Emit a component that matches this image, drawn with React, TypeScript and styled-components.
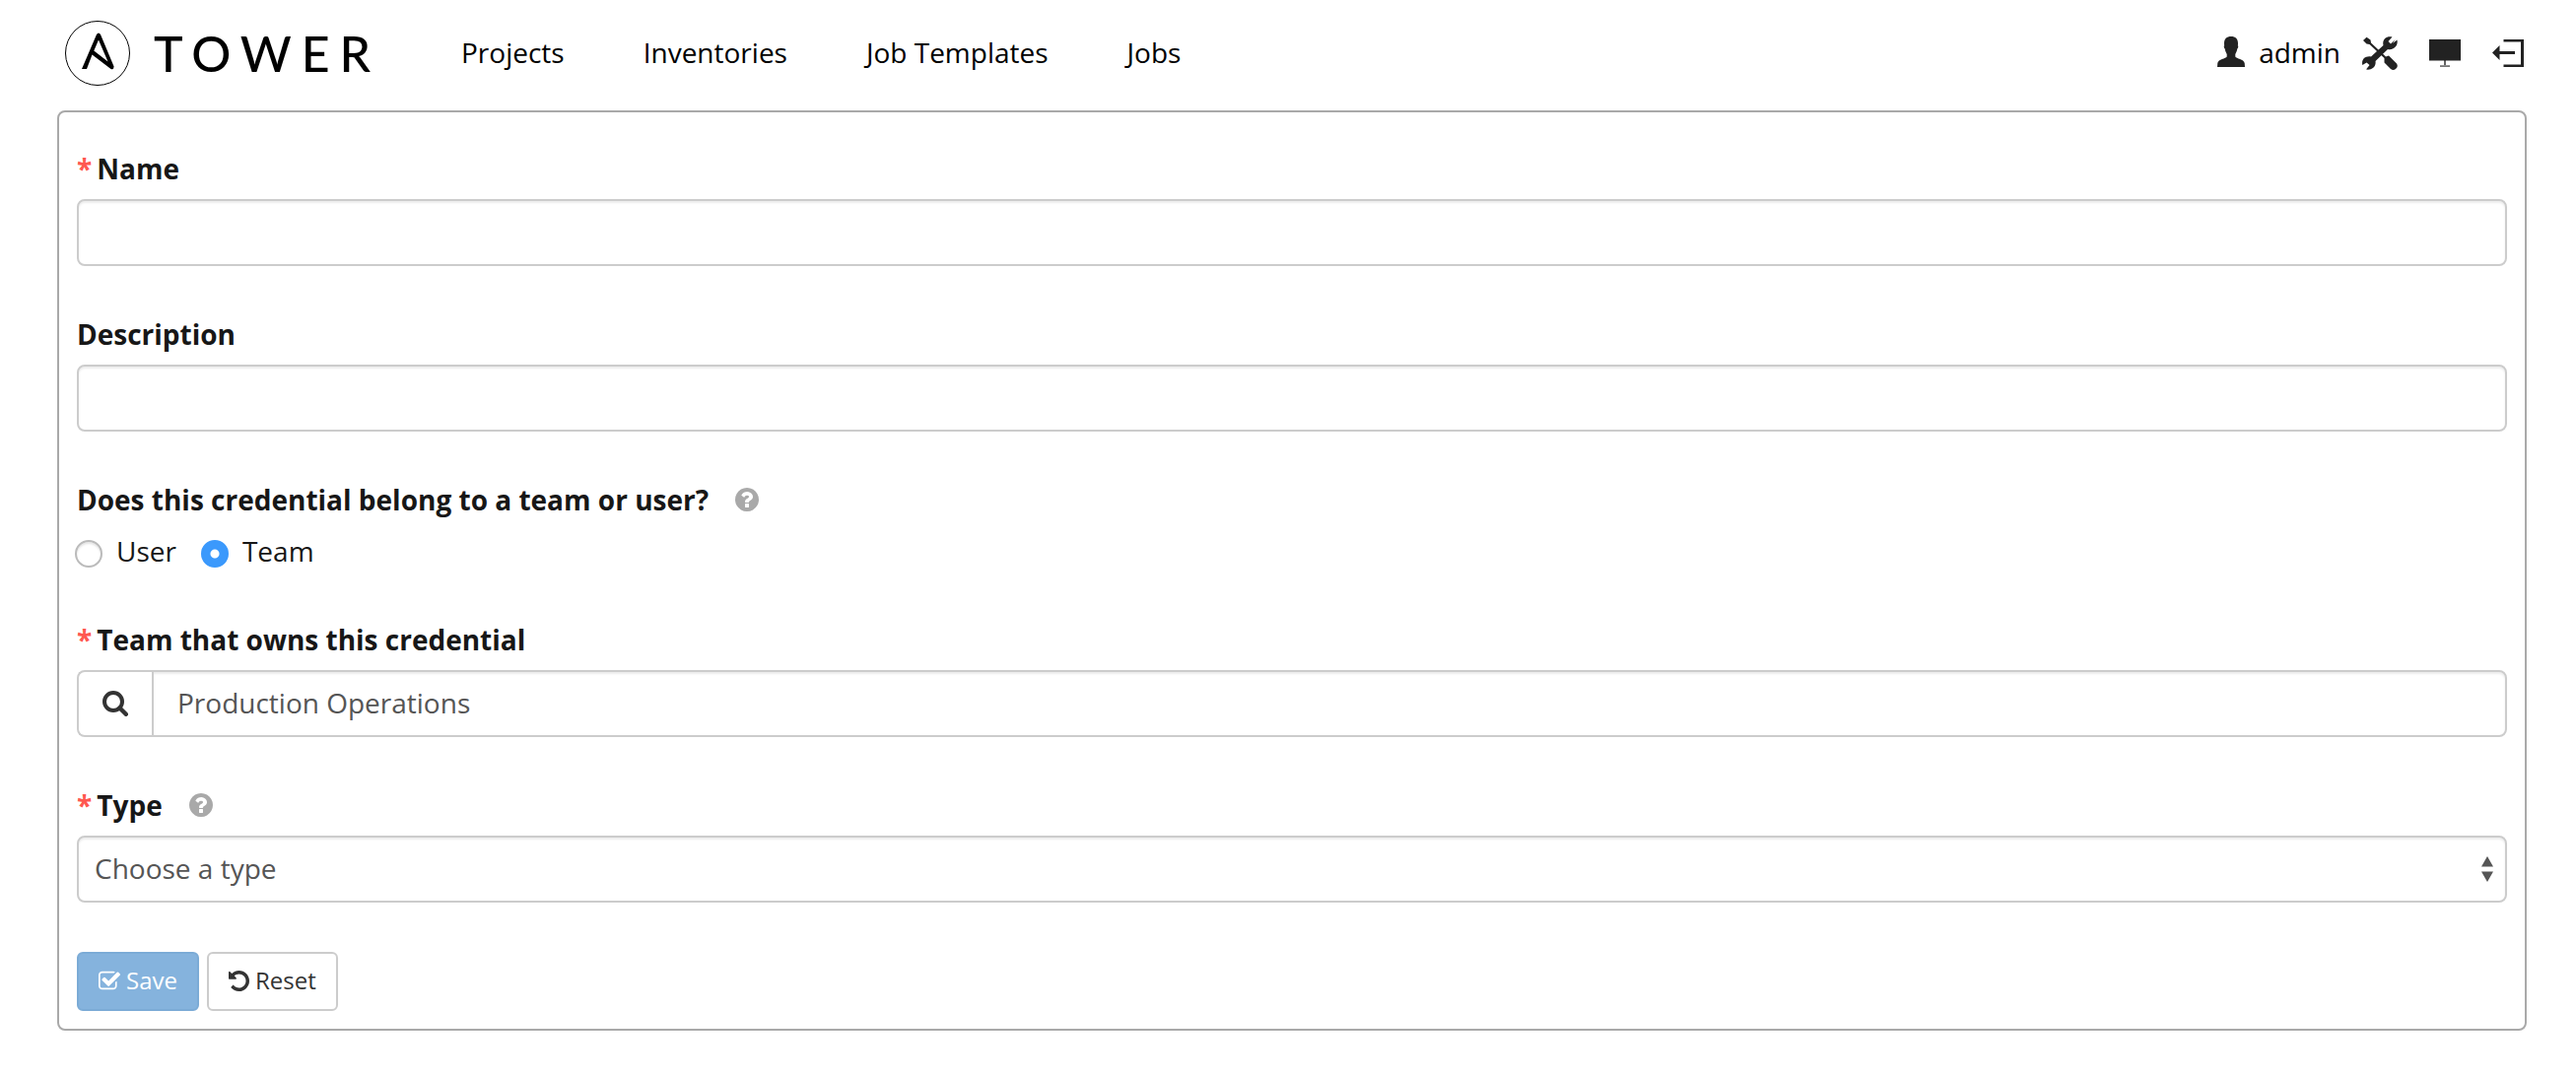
import React, { useState } from "react";
import styled, { createGlobalStyle } from "styled-components";

const GlobalStyle = createGlobalStyle`
  *, *::before, *::after { box-sizing: border-box; }
  body {
    margin: 0;
    background: #fff;
    color: #171717;
    font-family: "Open Sans", "Noto Sans", sans-serif;
    font-size: 28px;
    line-height: 40px;
  }
`;

const Page = styled.div`
  padding: 0 50px 48px 58px;
`;

const Header = styled.header`
  display: flex;
  align-items: center;
  height: 112px;
  padding: 0 3px 4px 8px;
`;

const Brand = styled.a`
  display: flex;
  align-items: center;
  gap: 24px;
  width: 402px;
  color: #000;
  text-decoration: none;
`;

const BrandName = styled.span`
  font-family: Lato, "Open Sans", sans-serif;
  font-size: 50px;
  font-weight: 500;
  line-height: 60px;
  letter-spacing: 10px;
`;

const Nav = styled.nav`
  display: flex;
  gap: 80px;
  flex: 1;
  padding-bottom: 2px;
`;

const NavLink = styled.a`
  color: #000;
  text-decoration: none;
  white-space: nowrap;
`;

const Tools = styled.div`
  display: flex;
  align-items: center;
  gap: 32px;
`;

const UserLink = styled.a`
  display: flex;
  align-items: center;
  gap: 14px;
  margin-right: -10px;
  padding-bottom: 2px;
  color: #000;
  text-decoration: none;
`;

const ToolButton = styled.button`
  display: flex;
  padding: 0;
  border: 0;
  background: none;
  color: #222;
  cursor: pointer;
`;

const Panel = styled.form`
  display: flex;
  flex-direction: column;
  gap: 50px;
  padding: 38px 18px 18px;
  border: 2px solid #a9a9a9;
  border-radius: 8px;
`;

const Field = styled.div`
  display: flex;
  flex-direction: column;
  gap: 12px;
`;

const LabelRow = styled.div`
  display: flex;
  align-items: center;
  gap: 27px;
`;

const Label = styled.label<{ $required?: boolean }>`
  font-weight: 700;
  line-height: 38px;
  ${({ $required }) =>
    $required &&
    `&::before {
      content: "*";
      margin-right: 5px;
      color: #ff5850;
    }`}
`;

const HelpButton = styled.button`
  display: flex;
  padding: 0;
  border: 0;
  background: none;
  color: #a9a9a9;
  cursor: pointer;
`;

const control = `
  width: 100%;
  height: 68px;
  border: 2px solid #ccc;
  border-radius: 8px;
  background: #fff;
  box-shadow: inset 0 2px 2px rgba(0, 0, 0, 0.075);
  color: #555;
  font: inherit;
  outline: none;
`;

const TextInput = styled.input`
  ${control}
  padding: 10px 24px 12px;
`;

const LookupGroup = styled.div`
  display: flex;
  ${TextInput} {
    flex: 1;
    border-radius: 0 8px 8px 0;
  }
`;

const LookupButton = styled.button`
  display: flex;
  align-items: center;
  justify-content: center;
  width: 76px;
  border: 2px solid #ccc;
  border-right: 0;
  border-radius: 8px 0 0 8px;
  background: #fff;
  color: #333;
  cursor: pointer;
`;

const SelectWrap = styled.div`
  display: grid;
  align-items: center;
  > * { grid-area: 1 / 1; }
  > svg {
    justify-self: end;
    margin-right: 14px;
    pointer-events: none;
  }
`;

const Select = styled.select`
  ${control}
  appearance: none;
  padding: 0 48px 2px 16px;
`;

const RadioField = styled.fieldset`
  display: flex;
  flex-direction: column;
  gap: 12px;
  min-width: 0;
  margin: 0;
  padding: 0;
  border: 0;
`;

const Radios = styled.div`
  display: flex;
  gap: 25px;
  margin-left: -2px;
`;

const RadioLabel = styled.label`
  display: flex;
  align-items: center;
  gap: 14px;
  line-height: 42px;
`;

const Radio = styled.input`
  appearance: none;
  width: 28px;
  height: 28px;
  margin: 5px 0 0;
  border: 2px solid #bbb;
  border-radius: 50%;
  background: #fff;
  box-shadow: inset 0 2px 2px rgba(0, 0, 0, 0.1);
  &:checked {
    border-color: #3b99fc;
    background: radial-gradient(circle, #fff 0 4px, #3b99fc 5px);
    box-shadow: none;
  }
`;

const Actions = styled.div`
  display: flex;
  gap: 8px;
`;

const Button = styled.button<{ $primary?: boolean }>`
  display: flex;
  align-items: center;
  gap: 6px;
  height: 60px;
  padding: 0 20px 2px;
  border: 2px solid ${({ $primary }) => ($primary ? "#7babd6" : "#ccc")};
  border-radius: 6px;
  background: ${({ $primary }) => ($primary ? "#85b3dd" : "#fff")};
  color: ${({ $primary }) => ($primary ? "#fff" : "#333")};
  font: inherit;
  font-size: 24px;
  line-height: 36px;
`;

const Logo = () => (
  <svg width="66" height="66" viewBox="0 0 66 66" aria-hidden="true">
    <circle cx="33" cy="33" r="32.5" fill="none" stroke="#000" />
    <path
      fillRule="evenodd"
      d="M17 49 32 14Q34 11 36 14L49.600 46.500Q49.500 50 46.500 49L27.500 34.500 22 49zM34 19.500 29.300 30.500 43.500 41.500z"
    />
  </svg>
);

const PersonIcon = () => (
  <svg width="28" height="32" viewBox="0 0 28 32" fill="#222" aria-hidden="true">
    <path d="M14 0c4.500 0 7 2.400 7 7 0 .8 0 1.500-.2 2.200.8.4.5 2.600-.5 3.300-.4 2.300-1.200 4.200-2 5.400v2.600c1 2 8.700 2.500 9.400 6.500l.3 4H0l.3-4c.7-4 8.400-4.500 9.400-6.500v-2.600c-.8-1.200-1.600-3.100-2-5.400-1-.7-1.300-2.900-.5-3.300C7 8.500 7 7.800 7 7c0-4.600 2.500-7 7-7z" />
  </svg>
);

const ToolsIcon = () => (
  <svg width="36" height="34" viewBox="0 0 36 34" fill="#222" aria-hidden="true">
    <path d="M1 4 4.500.8 8.500 3.500 9 6.500 24 20.500 27 19.500 35 27.500Q37 31 34 33 31.500 35 29 33L22.500 26.500 22.500 22 7.500 8 4.500 7.500z" />
    <path d="M33.500 3 29 7.500 26.500 5 30.500.6C25 -1 20 3 21.500 9L9 20.500C3 19.500-1 23.500 .3 29L4.500 26.500 7.500 29 4 33.500C9.500 34.500 14.500 30.500 13.500 25L26 13C32 14.500 37 9 35.400 3.500L31 7z" />
  </svg>
);

const MonitorIcon = () => (
  <svg width="32" height="28" viewBox="0 0 32 28" fill="#222" aria-hidden="true">
    <path d="M0 0h32v21.500H0zM15.300 21.500h1.400v4.700h-1.400z" />
    <path d="M11 26.200h10V28H11z" fill="#777" />
  </svg>
);

const LogoutIcon = () => (
  <svg width="32" height="28" viewBox="0 0 32 28" fill="#222" aria-hidden="true">
    <path d="M0 13.500 7.500 6v6H23v3H7.500v6zM11.500 0H32v28H11.500v-2.500H29v-23H11.500z" />
  </svg>
);

const SortArrows = () => (
  <svg width="12" height="26" viewBox="0 0 12 26" fill="#555" aria-hidden="true">
    <path d="M0 10.500 6 0l6 10.500zM0 15.500h12L6 26z" />
  </svg>
);

const SearchIcon = () => (
  <svg width="26" height="26" viewBox="0 0 26 26" fill="none" stroke="currentColor" aria-hidden="true">
    <circle cx="11" cy="11" r="9" strokeWidth="4" />
    <path d="M17.500 17.500 23.800 23.800" strokeWidth="4.400" strokeLinecap="round" />
  </svg>
);

const HelpIcon = () => (
  <svg width="24" height="24" viewBox="128 128 1536 1536" fill="currentColor" aria-hidden="true">
    <path d="M1024 1376v-192q0-14-9-23t-23-9h-192q-14 0-23 9t-9 23v192q0 14 9 23t23 9h192q14 0 23-9t9-23zm256-672q0-88-55.500-163t-138.500-116-170-41q-243 0-371 213-15 24 8 42l132 100q7 6 19 6 16 0 25-12 53-68 86-92 34-24 86-24 48 0 85.500 26t37.500 59q0 38-20 61t-68 45q-63 28-115.500 86.500t-52.500 125.500v36q0 14 9 23t23 9h192q14 0 23-9t9-23q0-19 21.500-49.500t54.500-49.500q32-18 49-28.500t46-35 44.500-48 28-60.500 12.500-81zm384 192q0 209-103 385.500t-279.500 279.500-385.500 103-385.500-103-279.500-279.500-103-385.500 103-385.500 279.500-279.500 385.500-103 385.500 103 279.500 279.500 103 385.500z" />
  </svg>
);

const CheckSquareIcon = () => (
  <svg width="22" height="20" viewBox="0 0 1664 1408" fill="currentColor" aria-hidden="true">
    <path d="M1408 802v318q0 119-84.500 203.500T1120 1408H288q-119 0-203.500-84.500T0 1120V288Q0 169 84.500 84.500T288 0h832q63 0 117 25 15 7 18 23 3 17-9 29l-49 49q-10 10-23 10-3 0-9-2-23-6-45-6H288q-66 0-113 47t-47 113v832q0 66 47 113t113 47h832q66 0 113-47t47-113V866q0-13 9-22l64-64q10-10 23-10 6 0 12 3 20 8 20 29zm231-489-814 814q-24 24-57 24t-57-24L281 697q-24-24-24-57t24-57l110-110q24-24 57-24t57 24l263 263 647-647q24-24 57-24t57 24l110 110q24 24 24 57t-24 57z" />
  </svg>
);

const UndoIcon = () => (
  <svg width="21" height="21" viewBox="0 0 1536 1536" fill="currentColor" aria-hidden="true">
    <path d="M1536 768q0 156-61 298t-164 245-245 164-298 61q-172 0-327-72.500T177 1259q-7-10-6.500-22.500t8.500-20.500l137-138q10-9 25-9 16 2 23 12 73 95 179 147t225 52q104 0 198.500-40.500T1130 1130t109.500-163.500T1280 768t-40.500-198.500T1130 406 966.500 296.500 768 256q-98 0-188 35.500T420 393l137 138q31 30 14 69-17 40-59 40H64q-26 0-45-19T0 576V128q0-42 40-59 39-17 69 14l130 129Q346 111 483.500 55.500T768 0q156 0 298 61t245 164 164 245 61 298z" />
  </svg>
);

const navItems = ["Projects", "Inventories", "Job Templates", "Jobs"];

export default function App() {
  const [owner, setOwner] = useState("team");

  return (
    <>
      <GlobalStyle />
      <Page>
        <Header>
          <Brand href="#">
            <Logo />
            <BrandName>TOWER</BrandName>
          </Brand>
          <Nav>
            {navItems.map((item) => (
              <NavLink key={item} href="#">{item}</NavLink>
            ))}
          </Nav>
          <Tools>
            <UserLink href="#"><PersonIcon />admin</UserLink>
            <ToolButton type="button" aria-label="Setup"><ToolsIcon /></ToolButton>
            <ToolButton type="button" aria-label="Monitor"><MonitorIcon /></ToolButton>
            <ToolButton type="button" aria-label="Log out"><LogoutIcon /></ToolButton>
          </Tools>
        </Header>
        <Panel onSubmit={(e) => e.preventDefault()}>
          <Field>
            <Label $required htmlFor="name">Name</Label>
            <TextInput id="name" />
          </Field>
          <Field>
            <Label htmlFor="description">Description</Label>
            <TextInput id="description" />
          </Field>
          <RadioField aria-labelledby="owner-label">
            <LabelRow>
              <Label as="span" id="owner-label">Does this credential belong to a team or user?</Label>
              <HelpButton type="button" aria-label="Help on ownership"><HelpIcon /></HelpButton>
            </LabelRow>
            <Radios>
              <RadioLabel>
                <Radio type="radio" name="owner" checked={owner === "user"} onChange={() => setOwner("user")} />
                User
              </RadioLabel>
              <RadioLabel>
                <Radio type="radio" name="owner" checked={owner === "team"} onChange={() => setOwner("team")} />
                Team
              </RadioLabel>
            </Radios>
          </RadioField>
          <Field>
            <Label $required htmlFor="team">Team that owns this credential</Label>
            <LookupGroup>
              <LookupButton type="button" aria-label="Look up team"><SearchIcon /></LookupButton>
              <TextInput id="team" defaultValue="Production Operations" />
            </LookupGroup>
          </Field>
          <Field>
            <LabelRow>
              <Label $required htmlFor="type">Type</Label>
              <HelpButton type="button" aria-label="Help on type"><HelpIcon /></HelpButton>
            </LabelRow>
            <SelectWrap>
              <Select id="type" defaultValue="">
                <option value="">Choose a type</option>
              </Select>
              <SortArrows />
            </SelectWrap>
          </Field>
          <Actions>
            <Button $primary type="submit"><CheckSquareIcon />Save</Button>
            <Button type="reset"><UndoIcon />Reset</Button>
          </Actions>
        </Panel>
      </Page>
    </>
  );
}
